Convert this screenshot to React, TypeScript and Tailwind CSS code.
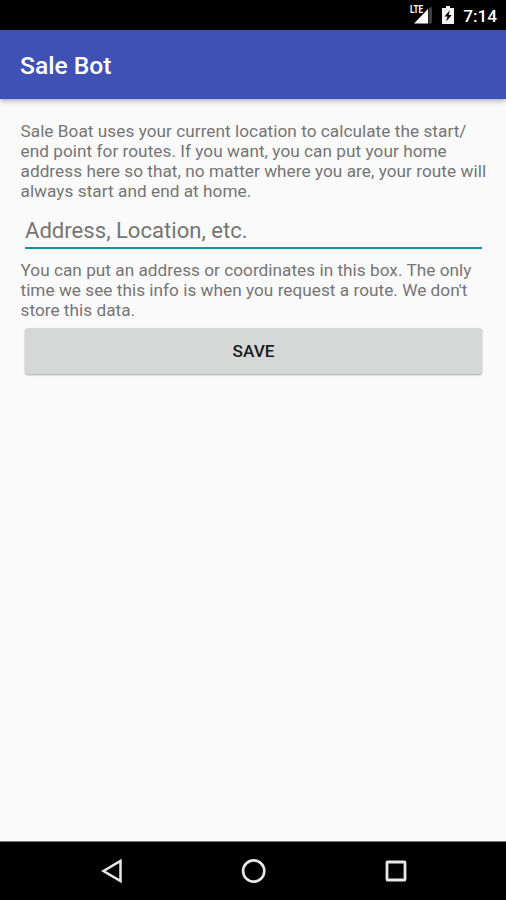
import React from "react";

const StatusBar = () => {
  return (
    <div className="flex h-[30px] shrink-0 items-center justify-end bg-black pr-[9px] text-white">
      <svg width="24" height="20" viewBox="0 0 24 20" className="mr-[9px] block">
        <path d="M19.500 4L23 1.500V18.500H19.500Z" fill="#3d3d3d" />
        <path d="M19 4V18.500H5Z" fill="#fff" />
        <path d="M0.500 0H14.500V8.500H0.500Z" fill="#000" />
        <text x="1" y="8" textLength="13" lengthAdjust="spacingAndGlyphs" className="fill-white text-[10px] font-bold">
          LTE
        </text>
      </svg>
      <svg width="12" height="18" viewBox="0 0 12 18" className="mr-[9px] block">
        <path d="M4 0H8V2H12V18H0V2H4Z" fill="#f2f2f2" />
        <path d="M7.800 4.200L2.500 10.500H5.500L4.200 15.500L9.700 9H6.700Z" fill="#000" />
      </svg>
      <span className="pt-[1px] text-[17.2px] leading-5 font-medium">7:14</span>
    </div>
  );
};

const NavigationBar = () => {
  return (
    <nav className="grid h-[59px] shrink-0 grid-cols-[182px_142px_182px] items-center border-t border-[#777] bg-black">
      <button aria-label="Back" className="flex justify-end pr-[59px]">
        <svg width="24" height="26" viewBox="0 0 24 26" fill="none">
          <path d="M21.500 3V23L4.500 13Z" stroke="#e8e8e8" strokeWidth="2.500" />
        </svg>
      </button>
      <button aria-label="Home" className="flex justify-center">
        <svg width="26" height="26" viewBox="0 0 26 26" fill="none">
          <circle cx="13.700" cy="13" r="10.600" stroke="#e8e8e8" strokeWidth="2.600" />
        </svg>
      </button>
      <button aria-label="Overview" className="flex pl-[59px]">
        <svg width="26" height="26" viewBox="0 0 26 26" fill="none">
          <rect x="4" y="4" width="18" height="18" rx="0.500" stroke="#e8e8e8" strokeWidth="2.800" />
        </svg>
      </button>
    </nav>
  );
};

const App = () => {
  return (
    <div className="flex h-[900px] w-[506px] flex-col overflow-hidden bg-[#fafafa] font-['Roboto','Liberation_Sans',sans-serif]">
      <StatusBar />

      <header className="flex h-[69px] shrink-0 items-center bg-[#3f51b5] px-5 pt-1 shadow-[0_2px_5px_rgba(0,0,0,0.3)]">
        <h1 className="text-[24.6px] leading-none font-medium text-white">Sale Bot</h1>
      </header>

      <main className="flex flex-1 flex-col pt-[22px] text-[17.2px] leading-5 text-[#757575]">
        <p className="pl-[20.5px] tracking-[0.045px] whitespace-nowrap">
          Sale Boat uses your current location to calculate the start/
          <br />
          end point for routes. If you want, you can put your home
          <br />
          address here so that, no matter where you are, your route will
          <br />
          always start and end at home.
        </p>

        <input
          type="text"
          placeholder="Address, Location, etc."
          className="mr-6 ml-[25px] mt-[13px] h-[35px] border-b-2 border-[#12979c] pb-[1px] text-[22.1px] outline-none placeholder:text-[#757575]"
        />

        <p className="mt-[11px] pl-[20.5px] tracking-[0.03px] whitespace-nowrap">
          You can put an address or coordinates in this box. The only
          <br />
          time we see this info is when you request a route. We don't
          <br />
          store this data.
        </p>

        <button className="mr-6 ml-[25px] mt-2 h-[46px] rounded-[3px] bg-[#d6d7d7] text-[17.2px] font-medium text-[#1c1c1c] shadow-[0_1px_2px_rgba(0,0,0,0.35)]">
          SAVE
        </button>
      </main>

      <NavigationBar />
    </div>
  );
};

export default App;
